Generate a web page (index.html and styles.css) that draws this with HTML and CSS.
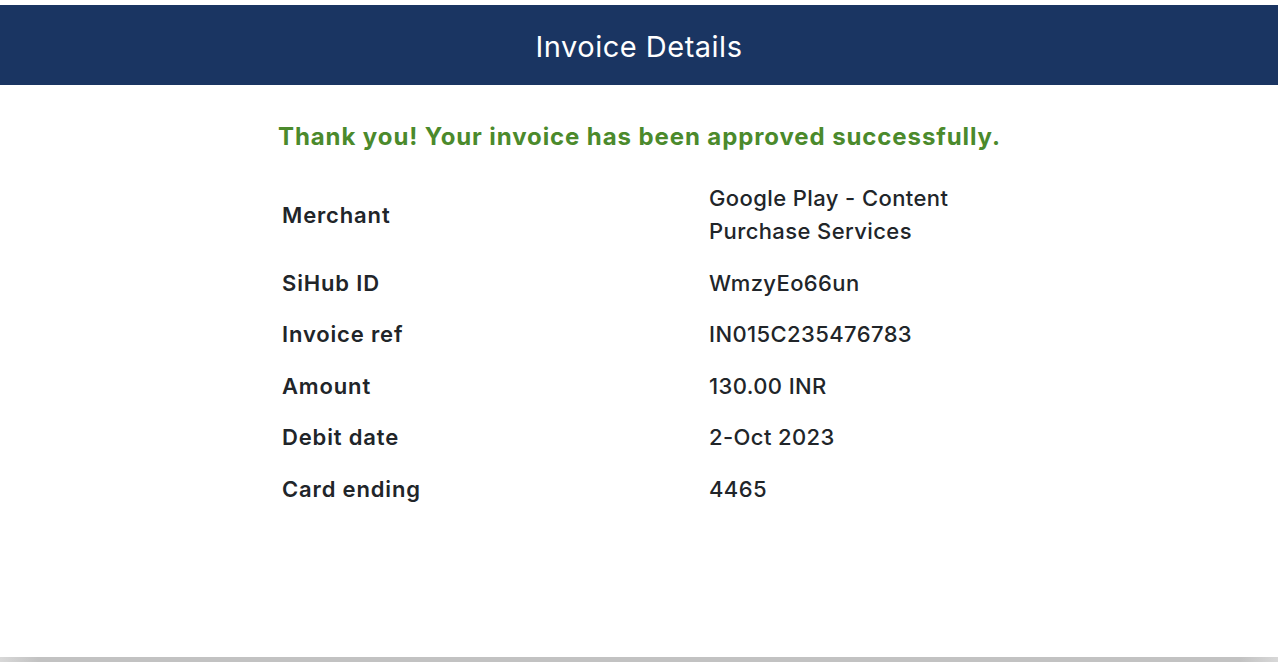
FILE: index.html
```html
<!DOCTYPE html>
<html>
<head>
<meta charset="utf-8">
<link rel="stylesheet" href="styles.css">
</head>
<body>
<div class="page">
  <header class="topbar"><h1 class="title">Invoice Details</h1></header>
  <main class="content">
    <p class="success">Thank you! Your invoice has been approved successfully.</p>
    <div class="details">
      <div class="label">Merchant</div><div class="value">Google Play - Content Purchase Services</div>
      <div class="label">SiHub ID</div><div class="value">WmzyEo66un</div>
      <div class="label">Invoice ref</div><div class="value">IN015C235476783</div>
      <div class="label">Amount</div><div class="value">130.00 INR</div>
      <div class="label">Debit date</div><div class="value">2-Oct 2023</div>
      <div class="label">Card ending</div><div class="value">4465</div>
    </div>
  </main>
  <div class="bottom-edge"></div>
</div>
</body>
</html>
```
FILE: styles.css
```css
* { box-sizing: border-box; }
html, body { margin: 0; padding: 0; background: #fff; }
body { font-family: Inter, "Noto Sans", sans-serif; color: #212529; }
.page { height: 662px; display: flex; flex-direction: column; padding-top: 5px; }
.topbar { height: 80px; background: #1a3562; display: flex; align-items: center; justify-content: center; }
.title { margin: 0; font-size: 29px; font-weight: 400; color: #fff; line-height: 1; letter-spacing: 0.5px; padding-top: 2px; }
.content { flex: 1; width: 722px; margin: 0 auto; padding-top: 36px; }
.success { margin: 0 0 20px; font-size: 24px; font-weight: 700; color: #4b8a2c; line-height: 32px; white-space: nowrap; letter-spacing: 0.9px; }
.details { display: grid; grid-template-columns: 427px 295px; align-items: center; }
.label, .value { font-size: 22px; line-height: 33px; padding: 9.25px 4px; }
.label { font-weight: 600; letter-spacing: 0.85px; }
.value { font-weight: 500; letter-spacing: 0.4px; }
.bottom-edge { height: 5px; background: linear-gradient(to right, #d8d8d8, #c2c2c2 3%, #c2c2c2 97%, #d8d8d8); }
```
